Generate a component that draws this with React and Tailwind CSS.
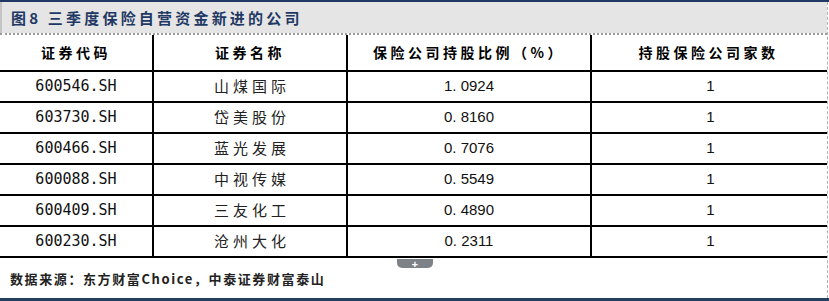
import React from "react";

const rows = [
  ["600546.SH", "山煤国际", "1. 0924", "1"],
  ["603730.SH", "岱美股份", "0. 8160", "1"],
  ["600466.SH", "蓝光发展", "0. 7076", "1"],
  ["600088.SH", "中视传媒", "0. 5549", "1"],
  ["600409.SH", "三友化工", "0. 4890", "1"],
  ["600230.SH", "沧州大化", "0. 2311", "1"],
];

const cjk = { fontFamily: '"Noto Sans CJK SC", sans-serif' };
const mono = { fontFamily: '"DejaVu Sans Mono", "Noto Sans CJK SC", monospace' };
const arial = { fontFamily: '"Liberation Sans", Arial, sans-serif' };

const cols = "grid grid-cols-[154px_194px_244px_233px]";

export default function App() {
  return (
    <div className="w-[829px] h-[301px] bg-white flex flex-col overflow-hidden">
      <div className="h-[2px] bg-[#1f3864]" />
      <div className="flex-1 flex flex-col border-r border-dashed border-[#b0b0b0] mr-[1px]">
        <div className="h-[31px] bg-[#e5e5e5] border-l-2 border-[#c4c4c4] flex items-center pl-[9px]">
          <span
            className="text-[15px] font-bold tracking-[3.2px] text-[#1f3864] leading-none"
            style={cjk}
          >
            图8 三季度保险自营资金新进的公司
          </span>
        </div>
        <div className="border-t-2 border-dotted border-[#9a9a9a]" />

        <div className={`${cols} h-[37px] border-b-2 border-black`}>
          {["证券代码", "证券名称", "保险公司持股比例（%）", "持股保险公司家数"].map((h, i) => (
            <div
              key={h}
              className={`flex items-center justify-center text-[14px] font-bold tracking-[3.5px] text-black ${
                i < 3 ? "border-r-2 border-black" : ""
              }`}
              style={cjk}
            >
              {h}
            </div>
          ))}
        </div>

        {rows.map((r) => (
          <div key={r[0]} className={`${cols} h-[31px] border-b-2 border-black`}>
            <div className="flex items-center justify-center border-r-2 border-black">
              <span className="text-[15px] text-[#111]" style={mono}>
                {r[0]}
              </span>
            </div>
            <div className="flex items-center justify-center border-r-2 border-black">
              <span className="text-[15px] tracking-[4px] text-[#222] pl-1" style={cjk}>
                {r[1]}
              </span>
            </div>
            <div className="flex items-center justify-center border-r-2 border-black">
              <span className="text-[15px] text-[#111]" style={arial}>
                {r[2]}
              </span>
            </div>
            <div className="flex items-center justify-center">
              <span className="text-[15px] text-[#111] pl-1" style={arial}>
                {r[3]}
              </span>
            </div>
          </div>
        ))}

        <div className="relative flex-1 flex items-start pl-[10px] pt-[11px]">
          <div className="absolute left-[397px] top-[1px] w-[36px] h-[9px] bg-[#7d8288] rounded-b-[5px] flex items-center justify-center">
            <span className="text-white text-[11px] font-bold leading-none">+</span>
          </div>
          <span className="text-[13px] font-bold tracking-[1.6px] text-[#222]" style={cjk}>
            数据来源：东方财富Choice，中泰证券财富泰山
          </span>
        </div>
      </div>
      <div className="h-[3px] bg-[#243f60]" />
    </div>
  );
}
